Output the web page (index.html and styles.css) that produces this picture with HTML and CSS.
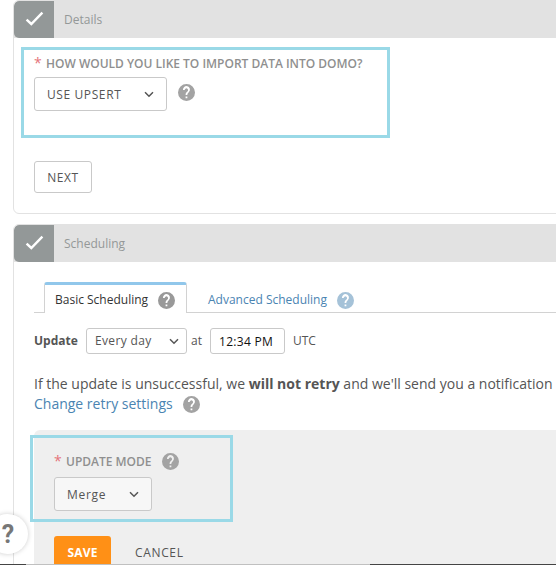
FILE: index.html
```
<!DOCTYPE html>
<html lang="en">
<head>
<meta charset="utf-8">
<title>Connector setup</title>
<link rel="stylesheet" href="styles.css">
</head>
<body>
<svg class="defs" width="0" height="0">
  <symbol id="help" viewBox="0 0 24 24"><path d="M12 0a12 12 0 1 0 0 24 12 12 0 0 0 0-24zm1.2 20.2h-2.5v-2.5h2.5zm2.5-9.1-1.1 1.1c-.9.9-1.4 1.7-1.4 3.4h-2.5v-.6c0-1.3.5-2.5 1.4-3.4l1.5-1.5a2.35 2.35 0 1 0-4.1-1.6H7a4.95 4.95 0 1 1 8.7 2.6z"/></symbol>
  <symbol id="check" viewBox="0 0 20 16"><path d="M1.6 8.6 6.3 13 17.4 1.6" fill="none" stroke="#fff" stroke-width="2.4"/></symbol>
  <symbol id="chevron" viewBox="0 0 10 7"><path d="m1 1.3 4 4 4-4" fill="none" stroke="#555" stroke-width="1.5"/></symbol>
</svg>
<main class="page">
  <section class="card details">
    <header class="card-head"><span class="step"><svg class="check"><use href="#check"/></svg></span><span class="title">Details</span></header>
    <div class="highlight import">
      <div class="label"><span class="star">*</span><span class="label-text question">HOW WOULD YOU LIKE TO IMPORT DATA INTO DOMO?</span></div>
      <div class="row"><div class="select upsert"><span>USE UPSERT</span><svg class="chevron"><use href="#chevron"/></svg></div><svg class="help"><use href="#help"/></svg></div>
    </div>
    <button class="next">NEXT</button>
  </section>
  <section class="card scheduling">
    <header class="card-head"><span class="step"><svg class="check"><use href="#check"/></svg></span><span class="title">Scheduling</span></header>
    <nav class="tabs">
      <div class="tab active"><span>Basic Scheduling</span><svg class="help"><use href="#help"/></svg></div>
      <div class="tab link"><span>Advanced Scheduling</span><svg class="help"><use href="#help"/></svg></div>
    </nav>
    <div class="update">
      <b>Update</b>
      <div class="select daily"><span>Every day</span><svg class="chevron"><use href="#chevron"/></svg></div>
      <span class="at">at</span>
      <div class="time"><span>12:34 PM</span></div>
      <span class="utc">UTC</span>
    </div>
    <div class="notice">
      <p><span>If the update is unsuccessful, we <b>will not retry</b> and we'll send you a notification</span></p>
      <p class="retry"><a>Change retry settings</a><svg class="help"><use href="#help"/></svg></p>
    </div>
    <div class="panel">
      <div class="highlight mode">
        <div class="label"><span class="star">*</span><span class="label-text">UPDATE MODE</span><svg class="help"><use href="#help"/></svg></div>
        <div class="select merge"><span>Merge</span><svg class="chevron"><use href="#chevron"/></svg></div>
      </div>
      <div class="actions"><button class="save">SAVE</button><span class="cancel">CANCEL</span></div>
    </div>
  </section>
</main>
<div class="bubble">?</div>
<div class="edge"></div>
</body>
</html>
```
FILE: styles.css
```
* { box-sizing: border-box; }
body {
  margin: 0;
  width: 556px;
  height: 565px;
  overflow: hidden;
  position: relative;
  background: #fff;
  color: #555;
  font: 12px/16px "Open Sans", sans-serif;
  white-space: nowrap;
}
p { margin: 0; }
.defs { display: block; }
.page { height: 565px; padding-left: 13px; overflow: hidden; }
.card {
  width: 560px;
  border: 1px solid #e2e2e2;
  border-radius: 6px;
  overflow: hidden;
}
.details { height: 214px; margin-bottom: 10px; }
.scheduling { height: 360px; }
.card-head { display: flex; align-items: center; height: 37px; background: #e2e2e2; }
.step {
  display: flex;
  align-items: center;
  justify-content: center;
  width: 40px;
  height: 37px;
  background: #939898;
  border-radius: 5px 0 0 5px;
}
.check { width: 20px; height: 16px; margin: -2px 0 0 1px; }
.title { margin-left: 10px; color: #949898; }
.help { flex: none; width: 17px; height: 17px; fill: #a3a3a3; }
.chevron { flex: none; width: 10px; height: 7px; }

.highlight { border: 3px solid #9ad9e7; }
.import { width: 369px; height: 91px; margin: 9px 0 0 7px; padding: 5px 0 0 10px; }
.label { display: flex; align-items: center; height: 16px; }
.star { width: 12px; color: #e5737b; font-size: 14px; }
.label-text { padding-top: 1px; color: #8f8f8f; font-weight: 600; letter-spacing: -.01px; }
.row { display: flex; align-items: center; margin-top: 6px; }
.row .help { margin: -3px 0 0 11px; }
.select {
  display: flex;
  align-items: center;
  justify-content: space-between;
  border: 1px solid #c9c9c9;
  border-radius: 3px;
}
.upsert { width: 133px; height: 34px; padding: 0 12px; letter-spacing: .6px; }
.upsert span, .merge span { padding-top: 2px; }
button { font: inherit; padding: 0; }
.next {
  display: block;
  width: 58px;
  height: 32px;
  margin: 23px 0 0 20px;
  padding-top: 2px;
  border: 1px solid #c9c9c9;
  border-radius: 3px;
  background: #fff;
  color: #555;
  letter-spacing: .6px;
}

.tabs { display: flex; height: 31px; margin: 20px 0 0 20px; padding-left: 10px; border-bottom: 1px solid #d2d2d2; }
.tab { display: flex; align-items: center; height: 31px; }
.tab.active {
  width: 143px;
  padding: 2px 0 0 10px;
  background: #fff;
  border: solid #d2d2d2;
  border-width: 3px 1px 0;
  border-top-color: #91c7eb;
  border-radius: 3px 3px 0 0;
  color: #333;
}
.active .help { margin-left: 10px; fill: #999; }
.link { margin-left: 21px; padding-top: 5px; color: #4a84b2; }
.link .help { margin-left: 10px; fill: #a5c2d8; }
.update { display: flex; align-items: center; height: 26px; margin: 15px 0 0 20px; }
.update b { width: 52px; }
.daily { width: 101px; height: 26px; padding: 0 7px 0 8px; letter-spacing: .35px; }
.at { width: 23px; padding-left: 4px; }
.time {
  width: 75px;
  height: 26px;
  padding: 5px 0 0 8px;
  border: 1px solid #c9c9c9;
  border-radius: 3px;
  color: #111;
  letter-spacing: .3px;
}
.utc { margin-left: 8px; }
.notice { margin: 20px 0 0 20px; font-size: 14px; line-height: 20px; }
.retry { display: flex; align-items: center; color: #4a84b2; }
.retry .help { margin-left: 10px; }
.panel { height: 160px; margin: 16px 0 0 20px; background: #efefef; border-radius: 6px 0 0 0; padding-top: 5px; }
.mode { width: 203px; height: 87px; margin-left: -4px; padding: 15px 0 0 21px; }
.mode .help { margin-left: 10px; }
.merge { width: 98px; height: 34px; margin-top: 8px; padding: 0 12px; background: #f7f7f7; letter-spacing: .7px; }
.actions { display: flex; align-items: center; margin: 14px 0 0 20px; }
.save { width: 57px; height: 32px; padding-top: 2px; border: 0; border-radius: 3px; background: #ff9016; color: #fff; font-weight: 700; letter-spacing: .2px; }
.cancel { margin-left: 24px; padding-top: 2px; letter-spacing: .65px; }

.bubble {
  position: absolute;
  left: -13px;
  top: 514px;
  width: 41px;
  height: 40px;
  border-radius: 50%;
  background: #fff;
  box-shadow: 0 0 5px rgba(0, 0, 0, .2);
  color: #777;
  font: 700 25px/41px Roboto, sans-serif;
  text-align: center;
  text-indent: 1px;
}
.edge {
  position: absolute;
  left: 0;
  bottom: 0;
  width: 556px;
  height: 1px;
  background: linear-gradient(90deg, #444 26px, #c0c0c0 26px 370px, #444 370px);
}
```
